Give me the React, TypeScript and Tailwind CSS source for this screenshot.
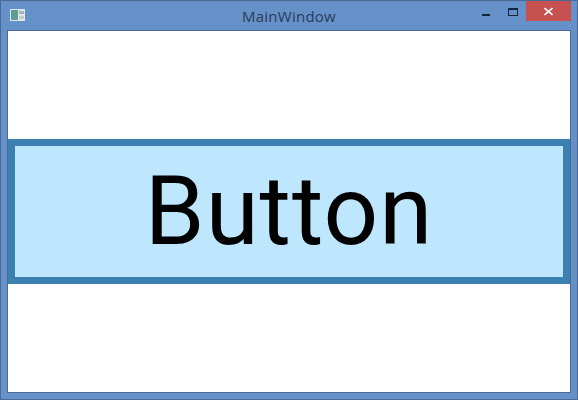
import React from "react";

const App = () => {
  return (
    <div className="w-[578px] h-[400px] flex flex-col bg-[#6590c8] border border-[#4a6a96] font-['Roboto',sans-serif]">
      {/* title bar */}
      <div className="h-[29px] flex items-start shrink-0 relative">
        <svg width="15" height="12" viewBox="0 0 15 12" className="ml-[9px] mt-[8px]">
          <rect x="0" y="0" width="15" height="12" fill="#dfe6ea" />
          <rect x="1" y="1" width="7" height="10" fill="#5f9c94" />
          <rect x="9" y="2" width="5" height="3" fill="#a9b8b4" />
          <rect x="9" y="7" width="5" height="3" fill="#c2ccc8" />
        </svg>
        <div className="absolute left-0 right-0 top-[5px] text-center text-[15px] tracking-[0.25px] leading-[20px] text-[#2a3c58] font-['Open_Sans',sans-serif]">MainWindow</div>
        <div className="ml-auto flex items-start mr-[6px]">
          <div className="w-[8px] h-[2px] bg-[#14263f] mt-[13px] mr-[18px]" />
          <div className="w-[10px] h-[8px] border border-[#14263f] border-t-2 mt-[7px] mr-[8px]" />
          <div className="w-[45px] h-[20px] bg-[#c75050] flex items-center justify-center">
            <svg width="9" height="9" viewBox="0 0 9 9">
              <path d="M0.5 1L8.5 8M8.5 1L0.5 8" stroke="#ffffff" strokeWidth="1.6" />
            </svg>
          </div>
        </div>
      </div>
      {/* client area */}
      <div className="flex-1 mx-[6px] mb-[6px] bg-white border border-[#4a6a96] flex items-center">
        <div className="w-full h-[145px] bg-[#bee6fd] border-[7px] border-[#3c7fb1] flex items-center justify-center">
          <span className="text-[96px] tracking-[1px] leading-none text-black pb-[2px]">Button</span>
        </div>
      </div>
    </div>
  );
};

export default App;
